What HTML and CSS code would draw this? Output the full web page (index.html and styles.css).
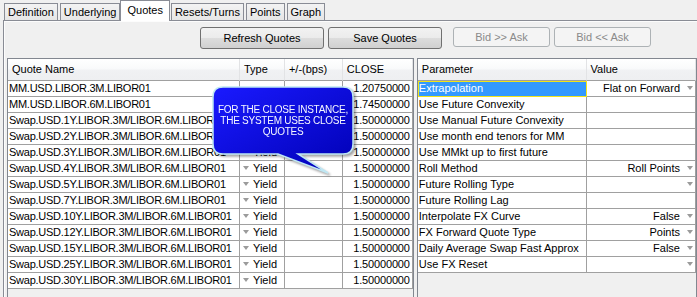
FILE: index.html
```html
<!DOCTYPE html>
<html lang="en">
<head>
  <meta charset="UTF-8" />
  <title>Quotes</title>
  <link rel="stylesheet" href="styles.css">
</head>
<body>
  <div class="tabs">
    <div class="tab">Definition</div>
    <div class="tab">Underlying</div>
    <div class="tab active">Quotes</div>
    <div class="tab">Resets/Turns</div>
    <div class="tab">Points</div>
    <div class="tab">Graph</div>
  </div>

  <div class="panel">
    <div class="toolbar">
      <button class="btn btn-refresh">Refresh Quotes</button>
      <button class="btn btn-save">Save Quotes</button>
      <button class="btn btn-bid" disabled>Bid &gt;&gt; Ask</button>
      <button class="btn btn-bid" disabled>Bid &lt;&lt; Ask</button>
    </div>

    <div class="grids">
      <div class="grid-box quotes-box">
        <table class="grid quotes">
          <colgroup>
            <col style="width:232px">
            <col style="width:45px">
            <col style="width:58px">
            <col style="width:70px">
          </colgroup>
          <thead>
            <tr><th>Quote Name</th><th>Type</th><th>+/-(bps)</th><th>CLOSE</th></tr>
          </thead>
          <tbody>
            <tr><td class="name">MM.USD.LIBOR.3M.LIBOR01</td><td></td><td></td><td class="num">1.20750000</td></tr>
            <tr><td class="name">MM.USD.LIBOR.6M.LIBOR01</td><td></td><td></td><td class="num">1.74500000</td></tr>
            <tr><td class="name">Swap.USD.1Y.LIBOR.3M/LIBOR.6M.LIBOR01</td><td class="type"><i class="dd"></i>Yield</td><td></td><td class="num">1.50000000</td></tr>
            <tr><td class="name">Swap.USD.2Y.LIBOR.3M/LIBOR.6M.LIBOR01</td><td class="type"><i class="dd"></i>Yield</td><td></td><td class="num">1.50000000</td></tr>
            <tr><td class="name">Swap.USD.3Y.LIBOR.3M/LIBOR.6M.LIBOR01</td><td class="type"><i class="dd"></i>Yield</td><td></td><td class="num">1.50000000</td></tr>
            <tr><td class="name">Swap.USD.4Y.LIBOR.3M/LIBOR.6M.LIBOR01</td><td class="type"><i class="dd"></i>Yield</td><td></td><td class="num">1.50000000</td></tr>
            <tr><td class="name">Swap.USD.5Y.LIBOR.3M/LIBOR.6M.LIBOR01</td><td class="type"><i class="dd"></i>Yield</td><td></td><td class="num">1.50000000</td></tr>
            <tr><td class="name">Swap.USD.7Y.LIBOR.3M/LIBOR.6M.LIBOR01</td><td class="type"><i class="dd"></i>Yield</td><td></td><td class="num">1.50000000</td></tr>
            <tr><td class="name">Swap.USD.10Y.LIBOR.3M/LIBOR.6M.LIBOR01</td><td class="type"><i class="dd"></i>Yield</td><td></td><td class="num">1.50000000</td></tr>
            <tr><td class="name">Swap.USD.12Y.LIBOR.3M/LIBOR.6M.LIBOR01</td><td class="type"><i class="dd"></i>Yield</td><td></td><td class="num">1.50000000</td></tr>
            <tr><td class="name">Swap.USD.15Y.LIBOR.3M/LIBOR.6M.LIBOR01</td><td class="type"><i class="dd"></i>Yield</td><td></td><td class="num">1.50000000</td></tr>
            <tr><td class="name">Swap.USD.25Y.LIBOR.3M/LIBOR.6M.LIBOR01</td><td class="type"><i class="dd"></i>Yield</td><td></td><td class="num">1.50000000</td></tr>
            <tr><td class="name">Swap.USD.30Y.LIBOR.3M/LIBOR.6M.LIBOR01</td><td class="type"><i class="dd"></i>Yield</td><td></td><td class="num">1.50000000</td></tr>
          </tbody>
        </table>

        <svg class="callout" width="160" height="98" viewBox="0 0 160 98">
          <defs>
            <linearGradient id="bubbleFill" x1="0" y1="0" x2="1" y2="1">
              <stop offset="0" stop-color="#1a1aff"/>
              <stop offset="1" stop-color="#0000b4"/>
            </linearGradient>
          </defs>
          <path d="M18,6 H138 Q148,6 148,16 V63 Q148,73 138,73 H93 L123,92 L73,73 H18 Q8,73 8,63 V16 Q8,6 18,6 Z"
                fill="url(#bubbleFill)" stroke="#bfe7f3" stroke-width="1.5"/>
          <text x="78" y="31.5">FOR THE CLOSE INSTANCE,</text>
          <text x="78" y="42.5">THE SYSTEM USES CLOSE</text>
          <text x="78" y="53.5">QUOTES</text>
        </svg>
      </div>

      <div class="grid-box params-box">
        <table class="grid params">
          <colgroup>
            <col style="width:169px">
            <col style="width:110px">
          </colgroup>
          <thead>
            <tr><th>Parameter</th><th>Value</th></tr>
          </thead>
          <tbody>
            <tr><td class="sel">Extrapolation</td><td class="val">Flat on Forward<i class="dd"></i></td></tr>
            <tr><td>Use Future Convexity</td><td></td></tr>
            <tr><td>Use Manual Future Convexity</td><td></td></tr>
            <tr><td>Use month end tenors for MM</td><td></td></tr>
            <tr><td>Use MMkt up to first future</td><td></td></tr>
            <tr><td>Roll Method</td><td class="val">Roll Points<i class="dd"></i></td></tr>
            <tr><td>Future Rolling Type</td><td class="val"><i class="dd"></i></td></tr>
            <tr><td>Future Rolling Lag</td><td></td></tr>
            <tr><td>Interpolate FX Curve</td><td class="val">False<i class="dd"></i></td></tr>
            <tr><td>FX Forward Quote Type</td><td class="val">Points<i class="dd"></i></td></tr>
            <tr><td>Daily Average Swap Fast Approx</td><td class="val">False<i class="dd"></i></td></tr>
            <tr><td>Use FX Reset</td><td class="val"><i class="dd"></i></td></tr>
          </tbody>
        </table>
      </div>
    </div>
  </div>
</body>
</html>
```

FILE: styles.css
```css
body {
  margin: 0;
  background: #f0f0f0;
  font-family: "Liberation Sans", Arial, sans-serif;
  font-size: 11px;
  color: #000;
  width: 697px;
  height: 297px;
  overflow: hidden;
}

/* tab strip */
.tabs {
  display: flex;
  align-items: flex-end;
  height: 20px;
  padding-left: 4px;
  position: relative;
  z-index: 2;
}
.tab {
  height: 16px;
  line-height: 17px;
  padding: 0 3px;
  margin-right: 2px;
  border: 1px solid #898c95;
  border-bottom: none;
  background: linear-gradient(#f3f3f3, #e6e6e6);
}
.tab.active {
  height: 20px;
  line-height: 19px;
  padding: 0 6px;
  margin: 0 1px -1px -2px;
  background: #fff;
}

.panel {
  margin-left: 3px;
  border-top: 1px solid #898c95;
  border-left: 1px solid #898c95;
  box-shadow: inset 1px 1px #fcfcfc;
  height: 276px;
  overflow: hidden;
}

/* buttons */
.toolbar {
  display: flex;
  align-items: flex-start;
  padding: 6px 0 0 196px;
}
.btn {
  font-family: "Liberation Sans", Arial, sans-serif;
  font-size: 11px;
  height: 22px;
  padding: 0;
  border: 1px solid #707070;
  border-radius: 3px;
  background: linear-gradient(#f2f2f2 0%, #ebebeb 50%, #dddddd 51%, #d0d0d0 100%);
  color: #000;
}
.btn-refresh { width: 124px; }
.btn-save { width: 114px; margin-left: 4px; }
.btn-bid {
  width: 97px;
  height: 20px;
  margin-left: 4px;
  border-color: #adb2b5;
  background: #f4f4f4;
  color: #8a8a8a;
}
.btn-save + .btn-bid { margin-left: 11px; }

/* grids */
.grids {
  display: flex;
  margin-top: 9px;
  padding-left: 3px;
}
.grid-box {
  position: relative;
  height: 240px;
  border: 1px solid #828790;
  background: #f0f0f0;
}
.quotes-box { width: 406px; }
.params-box { width: 279px; margin-left: 3px; }

.grid {
  border-collapse: separate;
  border-spacing: 0;
  table-layout: fixed;
}
.grid th {
  line-height: 21px;
  padding: 0 0 0 4px;
  font-weight: normal;
  text-align: left;
  white-space: nowrap;
  background: linear-gradient(#ffffff 0%, #f9fafb 45%, #f0f1f3 55%, #eeeff1 100%);
  border-right: 1px solid #e2e3e5;
  border-bottom: 1px solid #a0a0a0;
}
.grid td {
  line-height: 15px;
  padding: 0 0 0 1px;
  background: #fff;
  white-space: nowrap;
  overflow: hidden;
  border-right: 1px solid #a0a0a0;
  border-bottom: 1px solid #a0a0a0;
}

.quotes .name { letter-spacing: -0.25px; }
.quotes .num {
  text-align: right;
  padding-right: 2px;
  letter-spacing: -0.15px;
}
.quotes .type { padding-left: 3px; }
.quotes .type .dd { margin-right: 4px; }

.dd {
  display: inline-block;
  width: 0;
  height: 0;
  border-left: 3.5px solid transparent;
  border-right: 3.5px solid transparent;
  border-top: 4px solid #9b9b9b;
  vertical-align: middle;
  margin-top: -2px;
}

.params .val {
  text-align: right;
  padding-right: 2px;
}
.params .val .dd { margin-left: 7px; }
.params .sel {
  background: #3399ff;
  color: #fff;
  outline: 1px solid #f2e41a;
  outline-offset: -1px;
}

/* note bubble over the quotes grid */
.callout {
  position: absolute;
  left: 197px;
  top: 22px;
  filter: drop-shadow(2px 2px 1px rgba(0, 0, 0, 0.35));
}
.callout text {
  font-family: "Liberation Sans", Arial, sans-serif;
  font-size: 10px;
  letter-spacing: -0.25px;
  fill: #f4f6ff;
  text-anchor: middle;
}
```
